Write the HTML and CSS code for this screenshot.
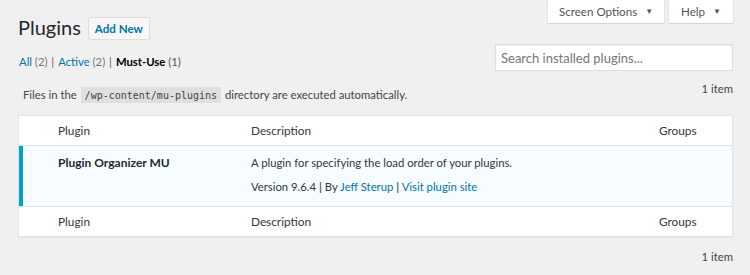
FILE: index.html
```html
<!DOCTYPE html>
<html lang="en">
<head>
    <meta charset="UTF-8">
    <title>Plugins</title>
    <link rel="stylesheet" href="styles.css">
</head>
<body>
    <div class="screen-meta-links">
        <button class="meta-tab options">Screen Options <span class="arrow">▼</span></button>
        <button class="meta-tab help">Help <span class="arrow">▼</span></button>
    </div>

    <div class="wrap">
        <div class="heading">
            <h1 class="title">Plugins</h1>
            <a class="add-new" href="#">Add New</a>
        </div>

        <div class="filter-bar">
            <ul class="subsubsub">
                <li><a href="#">All <span class="count">(2)</span></a> |</li>
                <li><a href="#">Active <span class="count">(2)</span></a> |</li>
                <li><a class="current" href="#">Must-Use <span class="count">(1)</span></a></li>
            </ul>
            <input class="search-box" type="search" placeholder="Search installed plugins...">
        </div>

        <div class="tablenav top">
            <p class="notice">Files in the <code>/wp-content/mu-plugins</code> directory are executed automatically.</p>
            <span class="num-items">1 item</span>
        </div>

        <div class="plugins-table">
            <div class="row head">
                <div class="cell"></div>
                <div class="cell">Plugin</div>
                <div class="cell">Description</div>
                <div class="cell">Groups</div>
            </div>
            <div class="row active">
                <div class="cell"></div>
                <div class="cell plugin-name">Plugin Organizer MU</div>
                <div class="cell">
                    <p>A plugin for specifying the load order of your plugins.</p>
                    <p class="meta">Version 9.6.4 <span class="sep">|</span> By <a href="#">Jeff Sterup</a> <span class="sep">|</span> <a href="#">Visit plugin site</a></p>
                </div>
                <div class="cell"></div>
            </div>
            <div class="row head foot">
                <div class="cell"></div>
                <div class="cell">Plugin</div>
                <div class="cell">Description</div>
                <div class="cell">Groups</div>
            </div>
        </div>

        <div class="tablenav bottom">
            <span class="num-items">1 item</span>
        </div>
    </div>
</body>
</html>
```

FILE: styles.css
```css
* {
    margin: 0;
    padding: 0;
    box-sizing: border-box;
}

body {
    font-family: Lato, 'Noto Sans', sans-serif;
    font-size: 11.3px;
    color: #444;
    background: #f1f0f1;
}

a {
    color: #0073aa;
    text-decoration: none;
}

/* screen options / help tabs */
.screen-meta-links {
    display: flex;
    justify-content: flex-end;
    gap: 5px;
    padding-right: 17px;
}

.meta-tab {
    font-family: inherit;
    font-size: 11.6px;
    color: #555;
    background: #fff;
    border: none;
    height: 23px;
    padding: 0;
    white-space: nowrap;
    box-shadow: 0 0 0 1px rgba(0, 0, 0, 0.04), 0 1px 1px rgba(0, 0, 0, 0.08);
}

.meta-tab.options {
    width: 116px;
}

.meta-tab.help {
    width: 64px;
}

.arrow {
    font-size: 8px;
    margin-left: 5px;
    color: #555;
    vertical-align: 2px;
}

.wrap {
    margin: -8px 17px 0 18px;
}

.heading {
    display: flex;
    align-items: center;
    gap: 7px;
    height: 25px;
}

.title {
    font-size: 20px;
    font-weight: 400;
    color: #23282d;
    line-height: 25px;
}

.add-new {
    display: inline-block;
    font-size: 11.6px;
    font-weight: 700;
    line-height: 21px;
    padding: 0 6px;
    border: 1px solid #ddd;
    background: #f7f7f7;
    border-radius: 2px;
    margin-top: 1px;
}

.filter-bar {
    display: flex;
    justify-content: space-between;
    align-items: flex-start;
    margin-top: 4px;
}

.subsubsub {
    list-style: none;
    display: flex;
    gap: 4px;
    margin-top: 9px;
    color: #666;
    padding-left: 1px;
}

.subsubsub li {
    line-height: 18px;
}

.subsubsub a {
    margin-right: 1px;
}

.subsubsub .count {
    color: #72777c;
}

.subsubsub .current {
    color: #000;
    font-weight: 700;
}

.subsubsub .current .count {
    font-weight: 400;
    color: #555;
}

.search-box {
    width: 238px;
    height: 27px;
    font-family: inherit;
    font-size: 13px;
    padding: 0 5px;
    border: 1px solid #ddd;
    background: #fff;
    box-shadow: inset 0 1px 2px rgba(0, 0, 0, 0.07);
    outline: none;
}

.search-box::placeholder {
    color: #72777c;
}

.tablenav {
    display: flex;
    justify-content: space-between;
    align-items: center;
}

.tablenav.top {
    margin-top: 10px;
    height: 27px;
    padding-left: 5px;
}

.notice code {
    font-family: 'DejaVu Sans Mono', monospace;
    font-size: 10px;
    background: rgba(0, 0, 0, 0.07);
    padding: 3px 4px 2px;
    margin: 0 1px;
    color: #444;
}

.num-items {
    color: #444;
    line-height: 16px;
    align-self: flex-start;
}

/* plugin list */
.plugins-table {
    margin-top: 7px;
    background: #fff;
    border: 1px solid #e5e5e5;
    box-shadow: 0 1px 1px rgba(0, 0, 0, 0.04);
}

.row {
    display: grid;
    grid-template-columns: 29px 193px 408px 1fr;
}

.row .cell {
    padding: 0 10px;
}

.row.head {
    color: #32373c;
    font-size: 11.8px;
    line-height: 29px;
    border-bottom: 1px solid #e1e1e1;
}

.row.foot {
    border-bottom: none;
    border-top: 1px solid #e1e1e1;
}

.row.active {
    background: #f7fcfe;
    box-shadow: inset 4px 0 0 #00a0d2;
    padding: 9px 0 11px;
    color: #32373c;
}

.plugin-name {
    font-size: 12px;
    font-weight: 700;
    color: #23282d;
}

.row.active p {
    line-height: 16px;
}

.row.active .meta {
    margin-top: 8px;
}

.meta .sep {
    color: #555;
    font-weight: 700;
}

.tablenav.bottom {
    justify-content: flex-end;
    margin-top: 12px;
}
```
